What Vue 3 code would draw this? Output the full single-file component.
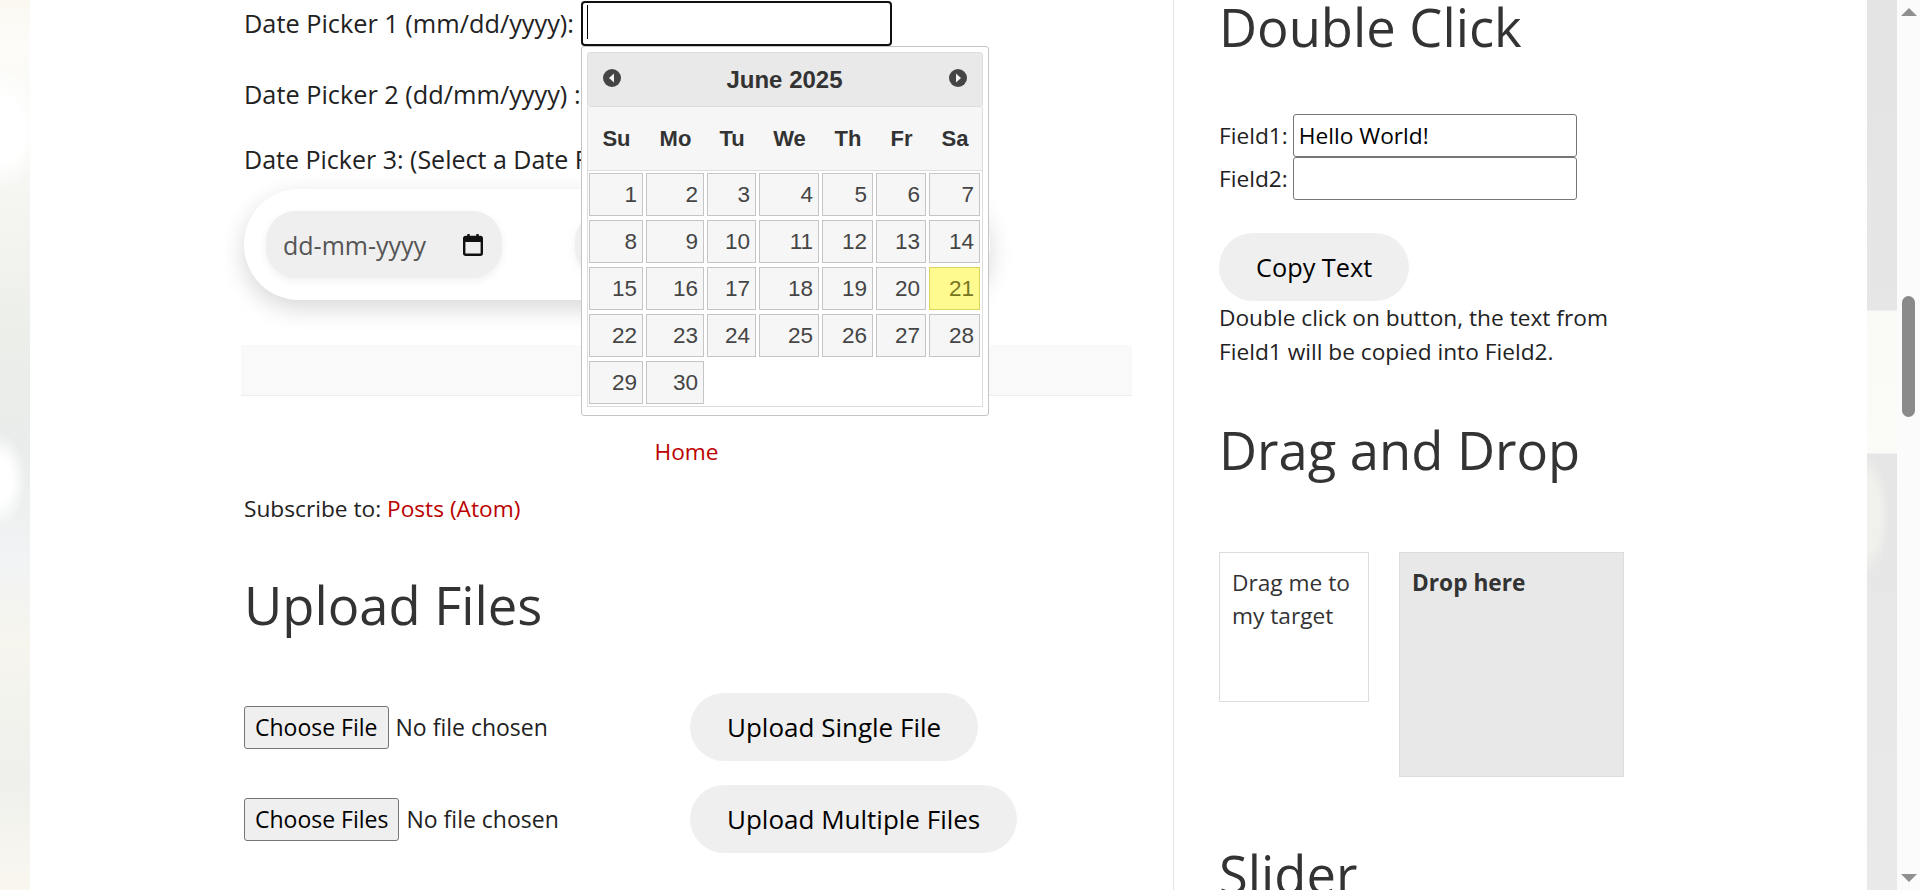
<template>
  <div class="page">
    <div class="bg-strip bg-left"></div>
    <main class="content">
      <section class="left-col">
        <div class="picker-row first">
          <label>Date Picker 1 (mm/dd/yyyy):</label>
          <input class="text-input focused" type="text" />
          <i class="caret"></i>
          <div class="calendar">
            <div class="cal-head">
              <span class="cal-nav">
                <svg viewBox="0 0 18 18" width="18" height="18"><circle cx="9" cy="9" r="9" fill="#454545" /><path d="M11 4.5v9L6 9z" fill="#f4f4f4" /></svg>
              </span>
              <b>June 2025</b>
              <span class="cal-nav">
                <svg viewBox="0 0 18 18" width="18" height="18"><circle cx="9" cy="9" r="9" fill="#454545" /><path d="M7 4.5v9L12 9z" fill="#f4f4f4" /></svg>
              </span>
            </div>
            <div class="cal-table">
              <div class="cal-week">
                <span v-for="d in weekdays" :key="d">{{ d }}</span>
              </div>
              <div class="cal-days">
                <span
                  v-for="n in 30"
                  :key="n"
                  class="cal-day"
                  :class="{ today: n === 21 }"
                >{{ n }}</span>
              </div>
            </div>
          </div>
        </div>
        <div class="picker-row second">
          <label>Date Picker 2 (dd/mm/yyyy) :</label>
        </div>
        <div class="picker-row third">
          <label>Date Picker 3: (Select a Date Range) :</label>
        </div>
        <div class="range-box">
          <div class="date-field">
            <span>dd-mm-yyyy</span>
            <svg viewBox="0 0 20 22" width="20" height="22"><path d="M5.5 0v4M14.5 0v4" stroke="#111" stroke-width="2.4" fill="none" /><rect x="1.2" y="3" width="17.6" height="17.8" rx="1.5" fill="none" stroke="#111" stroke-width="2.4" /><path d="M1 3h18v5H1z" fill="#111" /></svg>
          </div>
          <div class="date-field blank"></div>
        </div>
        <div class="nav-bar"></div>
        <div class="home-link"><a>Home</a></div>
        <p class="subscribe">Subscribe to: <a>Posts (Atom)</a></p>
        <h2 class="upload-title">Upload Files</h2>
        <div class="upload-row">
          <div class="file-pick"><button class="file-btn">Choose File</button><span>No file chosen</span></div>
          <button class="pill">Upload Single File</button>
        </div>
        <div class="upload-row">
          <div class="file-pick"><button class="file-btn">Choose Files</button><span>No file chosen</span></div>
          <button class="pill">Upload Multiple Files</button>
        </div>
      </section>

      <aside class="right-col">
        <h2 class="dbl-title">Double Click</h2>
        <div class="field-row">
          <label>Field1:</label>
          <input class="text-input field" type="text" value="Hello World!" />
        </div>
        <div class="field-row">
          <label>Field2:</label>
          <input class="text-input field" type="text" />
        </div>
        <button class="pill copy">Copy Text</button>
        <p class="copy-note">Double click on button, the text from Field1 will be copied into Field2.</p>
        <h2 class="drag-title">Drag and Drop</h2>
        <div class="drag-area">
          <div class="drag-box">Drag me to my target</div>
          <div class="drop-box"><b>Drop here</b></div>
        </div>
        <h2 class="slider-title">Slider</h2>
      </aside>
    </main>
    <div class="bg-strip bg-right"></div>
    <div class="scrollbar">
      <i class="arrow up"></i>
      <i class="thumb"></i>
      <i class="arrow down"></i>
    </div>
  </div>
</template>

<script setup>
const weekdays = ['Su', 'Mo', 'Tu', 'We', 'Th', 'Fr', 'Sa']
</script>

<style>
html, body { margin: 0; overflow: hidden; background: #fff; }
</style>

<style scoped>
.page { display: flex; height: 890px; overflow: hidden; font-family: "Open Sans", "Noto Sans", sans-serif; font-size: 22.7px; color: #222; }
.bg-strip { width: 30px; flex: none; }
.bg-left {
  background:
    radial-gradient(ellipse 26px 48px at 0 480px, #fff 45%, rgba(255, 255, 255, 0) 100%),
    radial-gradient(ellipse 44px 60px at 0 130px, #fff 55%, rgba(255, 255, 255, 0) 100%),
    linear-gradient(#fbf8f1 0, #fdfcf9 45px, #f5f6f2 200px, #eceeea 340px, #e9ecea 440px, #f1f3f4 560px, #f6f5ee 640px, #eff0ec 780px, #faf7f0 890px);
}
.bg-right {
  background:
    radial-gradient(ellipse 22px 60px at 0 515px, #f0f0ec 60%, rgba(240, 240, 236, 0) 100%),
    linear-gradient(#e4e4e4 0, #e6e6e6 310px, #f9faf5 311px, #fbfbf7 453px, #e6e6e6 454px, #e9e9e9 890px);
}
.content { flex: 1; display: flex; background: #fff; min-width: 0; }
.left-col { width: 1144px; flex: none; box-sizing: border-box; padding-left: 214px; border-right: 1px solid #e4e4e4; }
.right-col { flex: 1; padding-left: 45px; min-width: 0; }

.picker-row { display: flex; align-items: center; white-space: nowrap; line-height: 30px; font-size: 25.3px; }
.picker-row label { margin-right: 7px; }
.picker-row.first { position: relative; height: 46px; }
.picker-row.second { margin-top: 33px; }
.picker-row.third { margin-top: 35px; font-size: 25px; }
.text-input { box-sizing: border-box; background: #fff; border: 1px solid #767676; border-radius: 3px; padding: 0 5px; font: inherit; color: #000; outline: none; }
.text-input.focused { width: 311px; height: 45px; margin-top: 1px; border: 2px solid #101010; border-radius: 4px; }
.caret { position: absolute; left: 343px; top: 5px; width: 1px; height: 34px; background: #000; }

.calendar { position: absolute; left: 337px; top: 46px; width: 408px; height: 370px; box-sizing: border-box; padding: 5px; background: #fff; border: 1px solid #c5c5c5; border-radius: 3px; font-family: "Liberation Sans", Arial, sans-serif; color: #333; z-index: 5; }
.cal-head { height: 55px; box-sizing: border-box; display: flex; align-items: center; justify-content: space-between; padding: 0 15px; background: #e9e9e9; border: 1px solid #ddd; border-radius: 3px; font-size: 24px; }
.cal-head b { font-weight: 700; margin-left: -1px; }
.cal-nav { display: flex; margin-top: -3px; }
.cal-table { height: 300px; box-sizing: border-box; border: 1px solid #ddd; border-top: 0; }
.cal-week { display: grid; grid-template-columns: 57px 61px 52px 63px 54px 53px 54px; height: 63px; align-items: center; background: #f6f6f6; border-bottom: 1px solid #ddd; font-size: 22px; font-weight: 700; text-align: center; }
.cal-days { display: grid; grid-template-columns: 54px 58px 49px 60px 51px 50px 51px; gap: 4px 3px; padding: 2px 1px; grid-auto-rows: 43px; }
.cal-day { box-sizing: border-box; border: 1px solid #c5c5c5; background: #f6f6f6; color: #454545; font-size: 22.5px; line-height: 41px; text-align: right; padding-right: 5px; }
.cal-day.today { background: #fffa90; border-color: #dad55e; color: #777620; }

.range-box { width: 746px; height: 111px; margin-top: 15px; box-sizing: border-box; padding: 22px; display: flex; gap: 73px; background: #fff; border-radius: 55px; box-shadow: 0 8px 24px rgba(0, 0, 0, .16); }
.date-field { width: 236px; height: 67px; box-sizing: border-box; padding: 0 19px 0 17px; display: flex; align-items: center; justify-content: space-between; background: #efefef; border-radius: 30px; box-shadow: 0 3px 8px rgba(0, 0, 0, .06); color: #555; font-size: 25px; }
.nav-bar { width: 891px; height: 50px; margin: 45px 0 0 -3px; background: #f9f9f9; border-bottom: 1px solid #eee; }
.home-link { width: 891px; margin: 41px 0 0 -3px; text-align: center; line-height: 30px; }
a { color: #b00; }
.subscribe { margin: 27px 0 0; line-height: 30px; }
h2 { margin: 0; font-weight: 400; color: #333; font-size: 52.5px; line-height: 70px; white-space: nowrap; }
.upload-title { margin-top: 46px; }
.upload-row { display: flex; align-items: center; height: 68px; }
.upload-title + .upload-row { margin-top: 53px; }
.upload-row + .upload-row { margin-top: 24px; }
.file-pick { width: 446px; flex: none; display: flex; align-items: center; gap: 7px; font-size: 23px; }
.file-btn { height: 43px; box-sizing: border-box; padding: 0 10px; background: #efefef; border: 1px solid #767676; border-radius: 3px; font: inherit; color: #000; }
.pill { height: 68px; box-sizing: border-box; padding: 0 37px; background: #efefef; border: 0; border-radius: 34px; font-family: inherit; font-size: 26px; color: #000; white-space: nowrap; }

.dbl-title { margin-top: -8px; }
.field-row { display: flex; align-items: center; height: 43px; gap: 5px; }
.dbl-title + .field-row { margin-top: 52px; }
.text-input.field { width: 284px; height: 43px; }
.copy { display: block; margin-top: 33px; font-size: 25.3px; }
.copy-note { width: 410px; margin: 0; line-height: 34px; }
.drag-title { margin-top: 46px; }
.drag-area { display: flex; align-items: flex-start; gap: 30px; margin-top: 67px; }
.drag-box { width: 150px; height: 150px; box-sizing: border-box; padding: 13px 12px; border: 1px solid #ddd; line-height: 33px; color: #333; }
.drop-box { width: 225px; height: 225px; box-sizing: border-box; padding: 13px 12px; background: #e8e8e8; border: 1px solid #ddd; line-height: 33px; color: #333; }
.slider-title { margin-top: 62px; }

.scrollbar { width: 23px; flex: none; position: relative; background: #fbfbfb; }
.thumb { position: absolute; left: 5px; top: 296px; width: 13px; height: 121px; border-radius: 7px; background: #8a8a8a; }
.arrow { position: absolute; left: 4px; width: 0; height: 0; border-left: 8px solid transparent; border-right: 8px solid transparent; }
.arrow.up { top: 8px; border-bottom: 8px solid #8f8f8f; }
.arrow.down { bottom: 8px; border-top: 8px solid #8f8f8f; }
</style>
